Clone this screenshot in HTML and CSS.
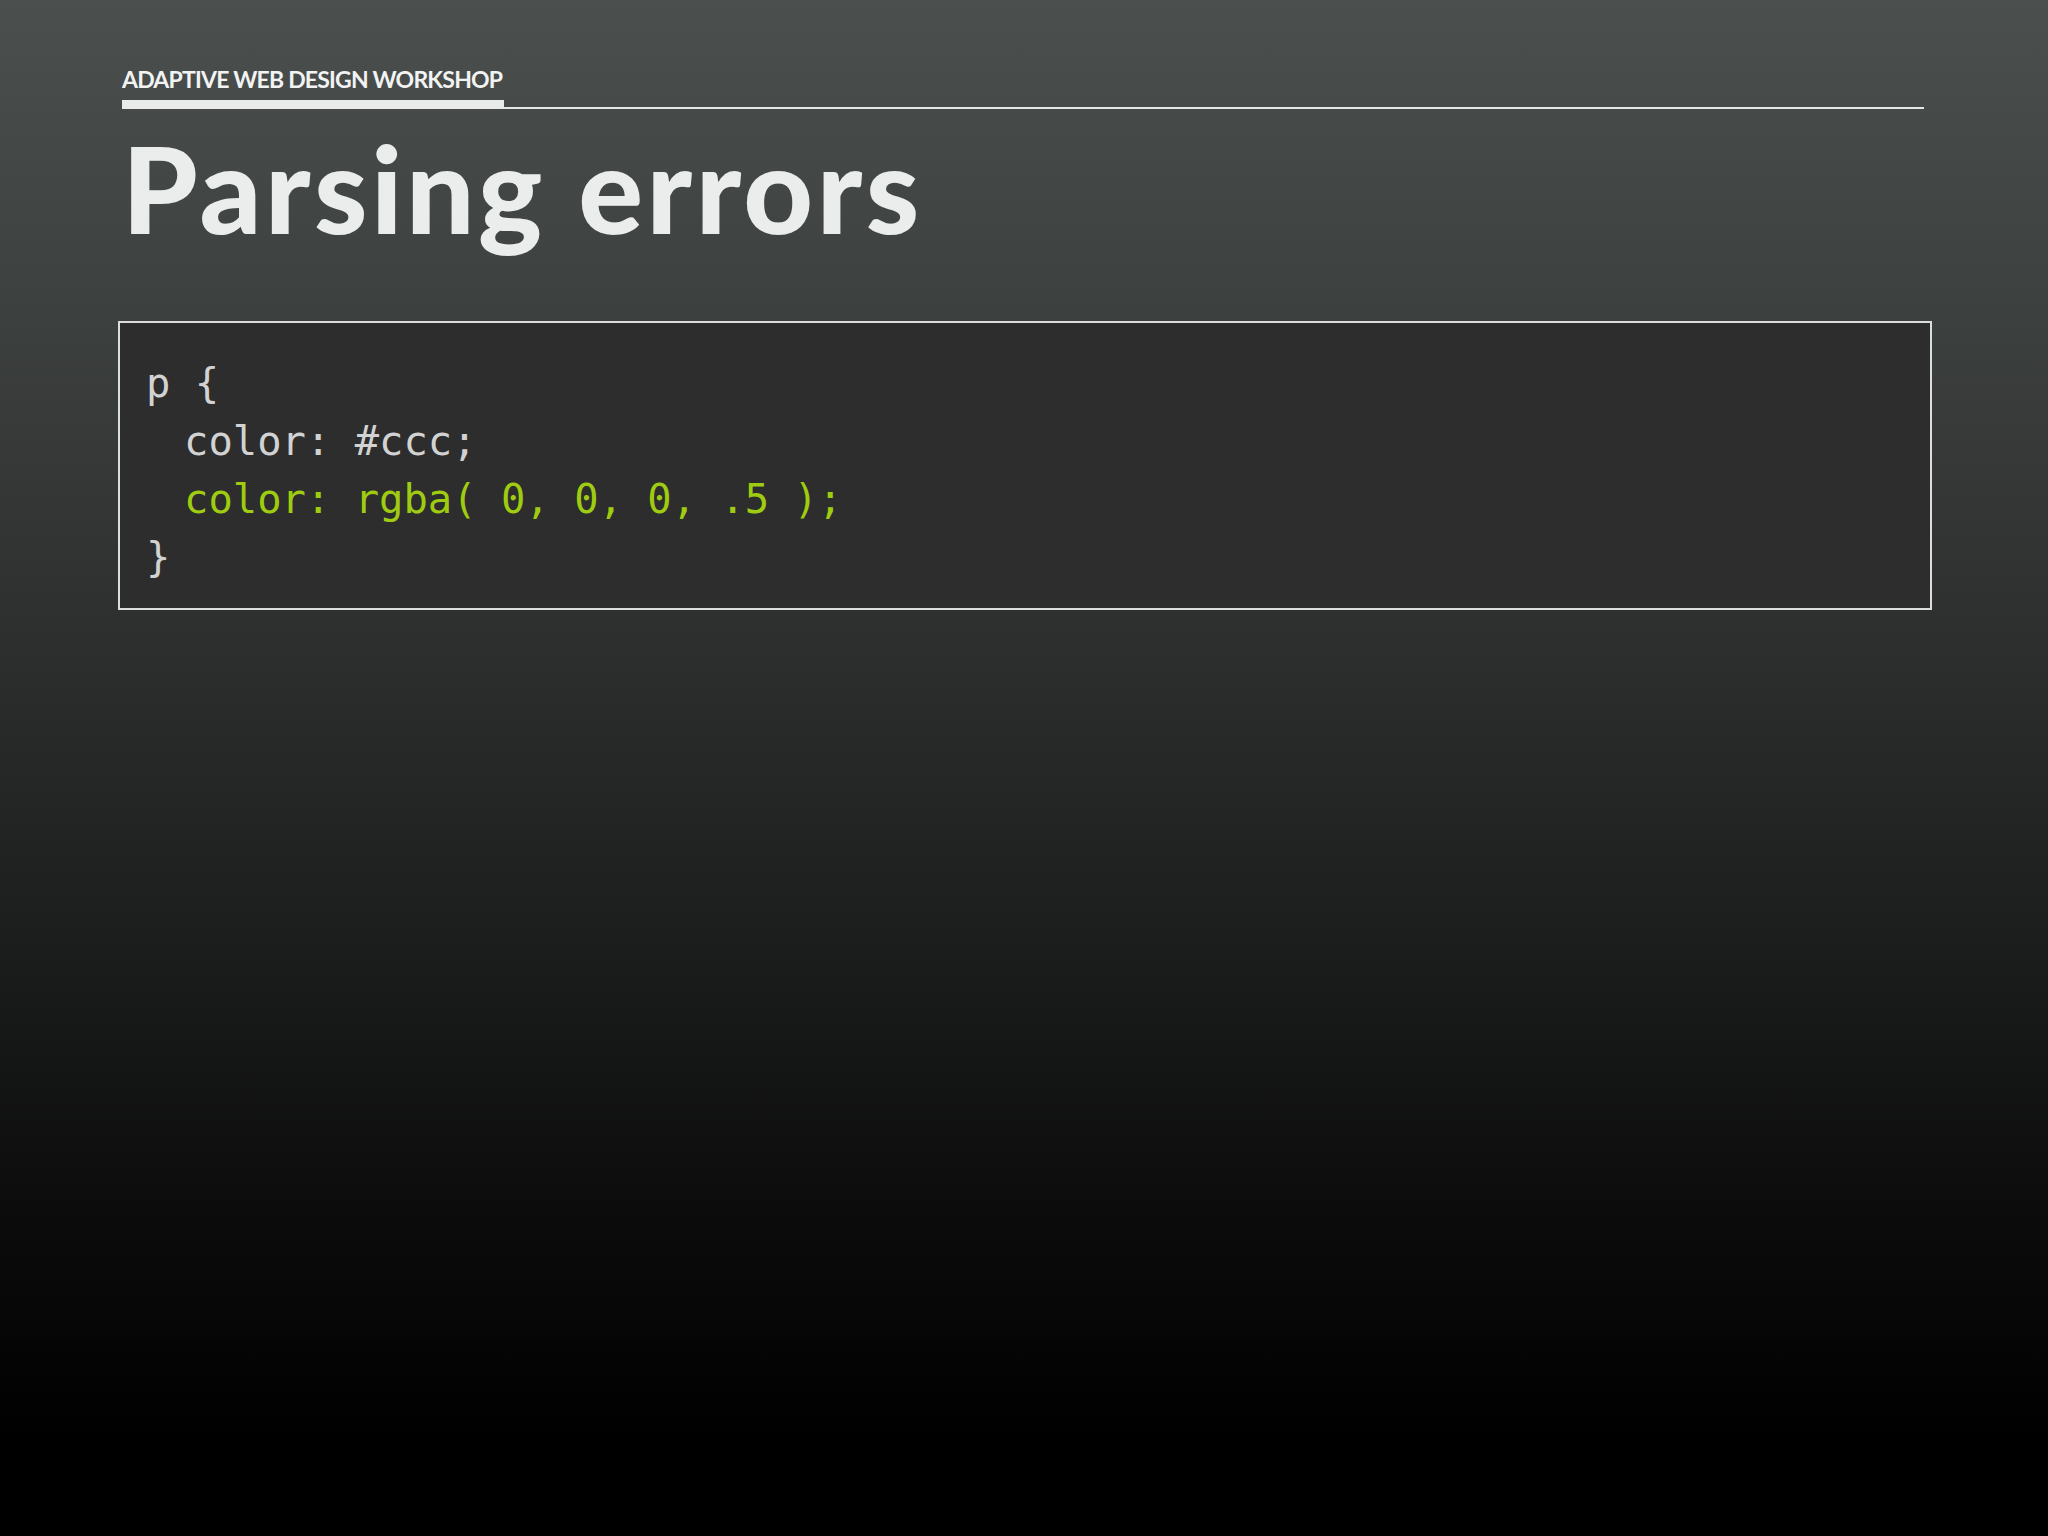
FILE: index.html
```html
<!DOCTYPE html>
<html lang="en">
<head>
<meta charset="utf-8">
<title>Parsing errors</title>
<link rel="stylesheet" href="styles.css">
</head>
<body>
<main class="slide">
  <header class="slide-header">
    <div class="kicker-rule"><span class="kicker">ADAPTIVE WEB DESIGN WORKSHOP</span></div>
    <h1 class="title">Parsing errors</h1>
  </header>
  <pre class="code"><code><span class="line">p {</span>
<span class="line indent">color: #ccc;</span>
<span class="line indent hl">color: rgba( 0, 0, 0, .5 );</span>
<span class="line">}</span></code></pre>
</main>
</body>
</html>
```

FILE: styles.css
```css
html, body {
  margin: 0;
  padding: 0;
}

body {
  width: 2048px;
  height: 1536px;
  background: linear-gradient(to bottom, #4b504f 0%, #3e4241 18%, #2d2f2e 42%, #1b1c1c 62%, #0b0b0b 80%, #000000 94%, #000000 100%);
  font-family: "Lato", "Liberation Sans", sans-serif;
  overflow: hidden;
}

.slide {
  padding: 68px 124px 0 122px;
  display: flex;
  flex-direction: column;
}

.kicker-rule {
  border-bottom: 2px solid #e6e8e8;
  display: flex;
  align-items: flex-end;
}

.kicker {
  display: inline-block;
  font-weight: 700;
  font-size: 23px;
  line-height: 23px;
  letter-spacing: -0.8px;
  color: #f2f3f3;
  padding: 0 2px 9px 0;
  border-bottom: 9px solid #e9ebeb;
  margin-bottom: -2px;
}

.title {
  margin: 18px 0 0 0;
  font-weight: 900;
  font-size: 121px;
  line-height: 121px;
  color: #ebeded;
  letter-spacing: 3.5px;
}

.code {
  margin: 73px 0 0 -4px;
  width: 1814px;
  box-sizing: border-box;
  border: 2px solid #dcdede;
  background: #2d2d2d;
  padding: 31px 26px 22px 26px;
  font-family: "DejaVu Sans Mono", "Liberation Mono", monospace;
  font-size: 40.5px;
  line-height: 58px;
  color: #d2d2d2;
  white-space: pre;
}

.code code {
  font: inherit;
}

.line {
  display: inline-block;
}

.indent {
  padding-left: 38px;
}

.hl {
  color: #9fcc11;
}
```
